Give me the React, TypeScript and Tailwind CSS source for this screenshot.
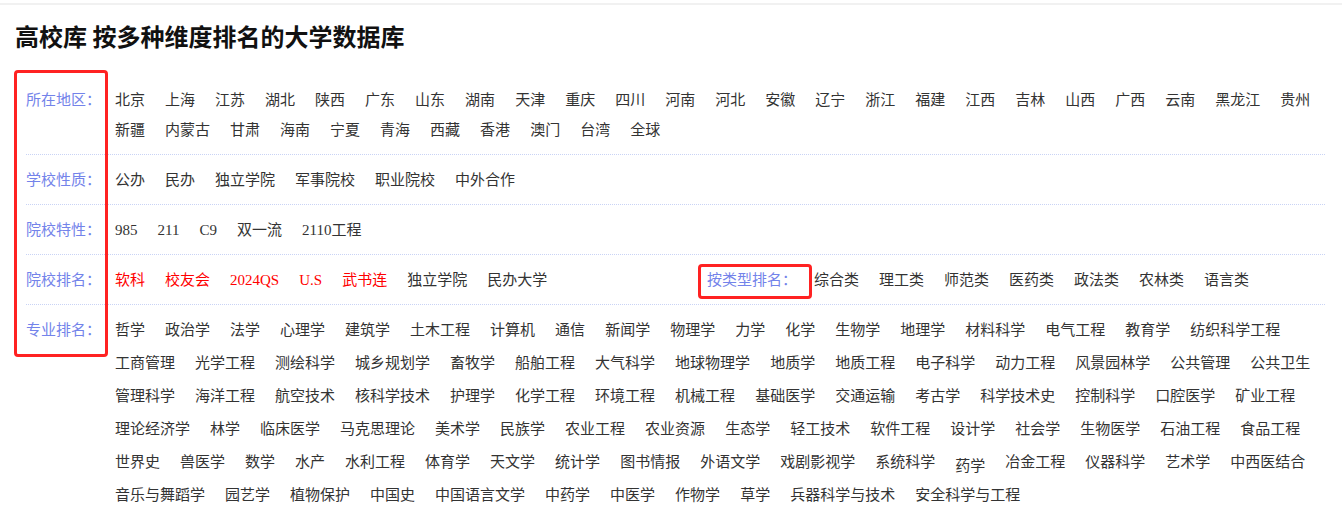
import React from "react";

const regions1 = [
  "北京","上海","江苏","湖北","陕西","广东","山东","湖南","天津","重庆","四川","河南","河北","安徽","辽宁","浙江","福建","江西","吉林","山西","广西","云南","黑龙江","贵州",
  "新疆","内蒙古","甘肃","海南","宁夏","青海","西藏","香港","澳门","台湾","全球",
];
const nature = ["公办","民办","独立学院","军事院校","职业院校","中外合作"];
const traits = ["985","211","C9","双一流","2110工程"];
const rankRed = ["软科","校友会","2024QS","U.S","武书连"];
const rankBlack = ["独立学院","民办大学"];
const types = ["综合类","理工类","师范类","医药类","政法类","农林类","语言类"];
const majors = [
  "哲学","政治学","法学","心理学","建筑学","土木工程","计算机","通信","新闻学","物理学","力学","化学","生物学","地理学","材料科学","电气工程","教育学","纺织科学工程",
  "工商管理","光学工程","测绘科学","城乡规划学","畜牧学","船舶工程","大气科学","地球物理学","地质学","地质工程","电子科学","动力工程","风景园林学","公共管理","公共卫生",
  "管理科学","海洋工程","航空技术","核科学技术","护理学","化学工程","环境工程","机械工程","基础医学","交通运输","考古学","科学技术史","控制科学","口腔医学","矿业工程",
  "理论经济学","林学","临床医学","马克思理论","美术学","民族学","农业工程","农业资源","生态学","轻工技术","软件工程","设计学","社会学","生物医学","石油工程","食品工程",
  "世界史","兽医学","数学","水产","水利工程","体育学","天文学","统计学","图书情报","外语文学","戏剧影视学","系统科学","药学","冶金工程","仪器科学","艺术学","中西医结合",
  "音乐与舞蹈学","园艺学","植物保护","中国史","中国语言文学","中药学","中医学","作物学","草学","兵器科学与技术","安全科学与工程",
];

function Label({ children }: { children: React.ReactNode }) {
  return (
    <div className="w-[89px] shrink-0 text-[15px] leading-[30px] text-[#7383ea] whitespace-nowrap">
      {children}
    </div>
  );
}

function Item({ text, red = false }: { text: string; red?: boolean }) {
  return (
    <span
      className={
        "h-[30px] text-[15px] leading-[30px] whitespace-nowrap cursor-pointer " +
        (red ? "text-[#ff0000]" : "text-[#333333]")
      }
    >
      {text}
    </span>
  );
}

function Row({ label, children, last = false }: { label: string; children: React.ReactNode; last?: boolean }) {
  return (
    <div
      className={
        "flex items-start pt-[10px] " +
        (last ? "pb-[10px]" : "pb-[9px] border-b border-dotted border-[#c9d3f5]")
      }
    >
      <Label>{label}</Label>
      {children}
    </div>
  );
}

export default function App() {
  return (
    <div
      className="relative min-h-[517px] w-full overflow-hidden bg-white"
      style={{ fontFamily: '"Liberation Serif", "Noto Sans CJK SC", sans-serif' }}
    >
      <div className="h-[3px]" />
      <div className="h-[2px] bg-[#f1f1f1]" />
      <h1
        className="pl-[15px] pt-[15px] text-[24px] font-bold leading-[32px] text-[#111111]"
        style={{ fontFamily: '"Noto Sans CJK SC", sans-serif' }}
      >
        高校库 按多种维度排名的大学数据库
      </h1>

      <div className="mt-[23px] pl-[26px] pr-[17px]">
        <Row label="所在地区：">
          <div className="flex flex-1 flex-wrap gap-x-[20px]">
            {regions1.map((t) => (
              <Item key={t} text={t} />
            ))}
          </div>
        </Row>
        <Row label="学校性质：">
          <div className="flex flex-1 flex-wrap gap-x-[20px]">
            {nature.map((t) => (
              <Item key={t} text={t} />
            ))}
          </div>
        </Row>
        <Row label="院校特性：">
          <div className="flex flex-1 flex-wrap gap-x-[20px]">
            {traits.map((t) => (
              <Item key={t} text={t} />
            ))}
          </div>
        </Row>
        <Row label="院校排名：">
          <div className="flex flex-1 items-start">
            <div className="flex w-[592px] shrink-0 flex-wrap gap-x-[20px]">
              {rankRed.map((t) => (
                <Item key={t} text={t} red />
              ))}
              {rankBlack.map((t) => (
                <Item key={t} text={t} />
              ))}
            </div>
            <div className="w-[107px] shrink-0 text-[15px] leading-[30px] text-[#7383ea] whitespace-nowrap">
              按类型排名：
            </div>
            <div className="flex flex-1 flex-wrap gap-x-[20px]">
              {types.map((t) => (
                <Item key={t} text={t} />
              ))}
            </div>
          </div>
        </Row>
        <Row label="专业排名：" last>
          <div className="flex flex-1 flex-wrap gap-x-[20px] gap-y-[3px]">
            {majors.map((t) =>
              t === "药学" ? (
                <span
                  key={t}
                  className="box-border h-[30px] pt-[4px] text-[15px] leading-[30px] whitespace-nowrap text-[#333333]"
                >
                  {t}
                </span>
              ) : (
                <Item key={t} text={t} />
              )
            )}
          </div>
        </Row>
      </div>

      {/* annotation boxes */}
      <div className="pointer-events-none absolute left-[14px] top-[70px] h-[287px] w-[94px] rounded-[4px] border-[3px] border-[#ff2222]" />
      <div className="pointer-events-none absolute left-[698px] top-[264px] h-[35px] w-[114px] rounded-[4px] border-[3px] border-[#ff2222]" />
    </div>
  );
}
